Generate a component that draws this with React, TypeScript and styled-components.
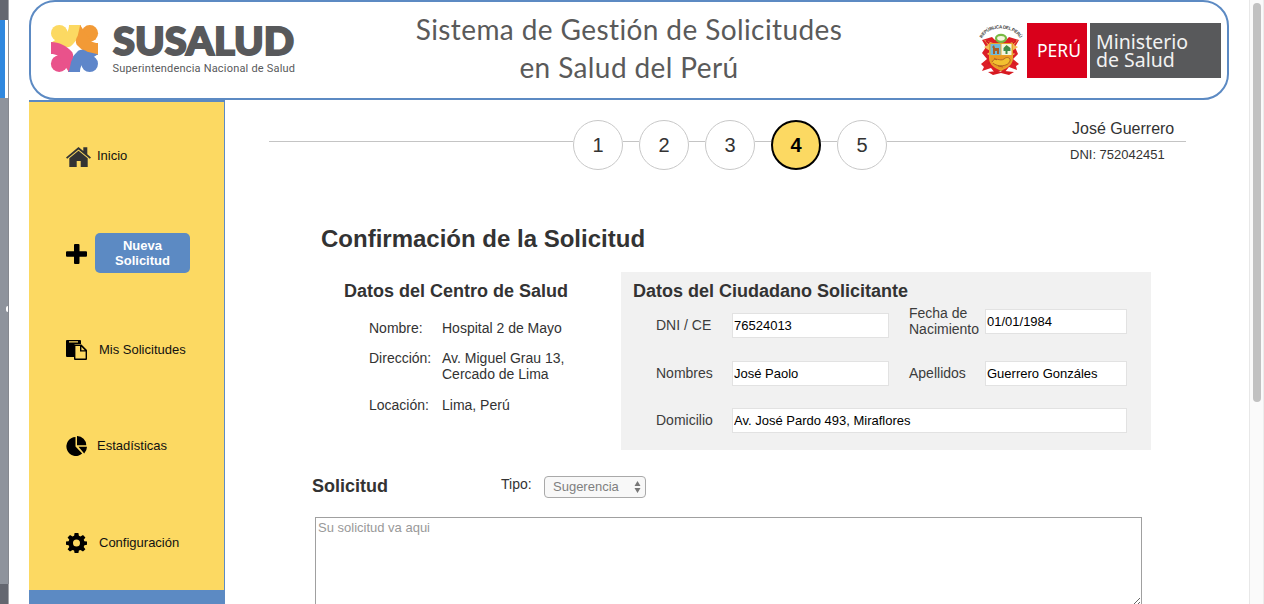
import React from "react";
import styled, { createGlobalStyle } from "styled-components";

const blue = "#5c8ac3";
const yellow = "#fcd962";
const ink = "#333333";
const sans = `"Liberation Sans", Arial, Helvetica, sans-serif`;

const GlobalStyle = createGlobalStyle`
  *, *::before, *::after { box-sizing: border-box; }
  html, body { margin: 0; padding: 0; background: #fff; overflow: hidden; }
  body { font-family: ${sans}; font-size: 14px; color: ${ink}; }
  h1, h2, p { margin: 0; }
`;

const Screen = styled.div`
  display: flex;
  width: 1264px;
  height: 604px;
  overflow: hidden;
`;

const WindowEdge = styled.div`
  display: flex;
  flex-direction: column;
  width: 9px;
  flex: none;
`;

const EdgePart = styled.div<{ $height?: number; $color: string; $line: string; $width?: number }>`
  height: ${(p) => (p.$height ? `${p.$height}px` : "auto")};
  flex: ${(p) => (p.$height ? "none" : "1")};
  border-right: 1px solid ${(p) => p.$line};
  background: linear-gradient(${(p) => p.$color}, ${(p) => p.$color}) no-repeat left / ${(p) => p.$width ?? 9}px 100%;
`;

const EdgeBody = styled(EdgePart)`
  display: flex;
  align-items: flex-start;
  justify-content: flex-end;
  padding-top: 208px;
`;

const EdgeMark = styled.span`
  width: 2px;
  height: 6px;
  border-radius: 3px 0 0 3px;
  background: #fff;
`;

const Page = styled.div`
  display: flex;
  flex-direction: column;
  flex: 1;
  padding-left: 20px;
  min-width: 0;
`;

const Scrollbar = styled.div`
  width: 15px;
  flex: none;
  padding: 3px 3px 0;
  background: #fafafa;
  border-left: 1px solid #e8e8e8;
  border-right: 1px solid #ededed;
`;

const ScrollThumb = styled.div`
  width: 8px;
  height: 399px;
  border-radius: 4px;
  background: #c1c1c1;
`;

const Header = styled.header`
  display: flex;
  align-items: flex-start;
  width: 1200px;
  height: 100px;
  flex: none;
  border: 2px solid ${blue};
  border-radius: 26px;
  background: #fff;
`;

const Brand = styled.div`
  width: 320px;
  padding: 20px 0 0 20px;

  svg { display: block; overflow: visible; }
`;

const Title = styled.h1`
  width: 556px;
  padding-top: 8px;
  font-family: Lato, "Open Sans", sans-serif;
  font-size: 28px;
  font-weight: 400;
  line-height: 38px;
  letter-spacing: 0.4px;
  text-align: center;
  color: #5a5a5a;
`;

const Ministry = styled.div`
  display: flex;
  margin-left: auto;
  padding: 21px 6px 0 0;

  svg { overflow: visible; }
`;

const Country = styled.div`
  display: flex;
  align-items: center;
  justify-content: center;
  width: 60px;
  height: 55px;
  margin: 0 3px 0 5px;
  background: #d9001b;
  color: #fff;
  font: 400 17.5px/24px "Noto Sans", "Open Sans", sans-serif;
  padding: 0 0 2px 4px;
`;

const MinistryName = styled.div`
  width: 131px;
  height: 55px;
  padding: 10px 0 0 6px;
  background: #58595b;
  color: #f2f2f2;
  font: 400 19.5px/18px "Noto Sans", "Open Sans", sans-serif;
`;

const Body = styled.div`
  display: flex;
  flex: 1;
  min-height: 0;
`;

const Sidebar = styled.nav`
  display: grid;
  grid-template-rows: 96px 98px 94px 98px 95px 1fr;
  width: 196px;
  flex: none;
  padding-top: 7px;
  border-top: 2px solid ${blue};
  border-right: 1px solid ${blue};
  background: ${yellow};
`;

const NavItem = styled.a`
  display: flex;
  align-items: center;
  padding-left: 37px;
  font-size: 13px;
  line-height: 15px;
  color: #111;

  &:nth-child(5) { padding-top: 1px; }
`;

const NavLabel = styled.span<{ $rise?: number }>`
  padding-bottom: ${(p) => p.$rise ?? 1}px;
`;

const NavIcon = styled.svg<{ $gap: number }>`
  flex: none;
  margin-right: ${(p) => p.$gap}px;
`;

const NewButton = styled.span`
  display: flex;
  align-items: center;
  justify-content: center;
  width: 95px;
  height: 40px;
  margin-bottom: 2px;
  border-radius: 5px;
  background: ${blue};
  color: #fff;
  font-weight: 700;
  text-align: center;
`;

const SidebarFooter = styled.div`
  margin-right: -1px;
  background: ${blue};
`;

const Main = styled.main`
  display: flex;
  flex-direction: column;
  flex: 1;
  min-width: 0;
  padding-top: 20px;
`;

const Stepper = styled.div`
  display: flex;
  align-items: flex-start;
  height: 50px;
  flex: none;
  padding-left: 44px;
`;

const Connector = styled.span<{ $width: number }>`
  width: ${(p) => p.$width}px;
  height: 1px;
  margin-top: 21px;
  background: #c4c4c4;
`;

const Step = styled.span<{ $active: boolean }>`
  display: flex;
  align-items: center;
  justify-content: center;
  width: 50px;
  height: 50px;
  flex: none;
  border-radius: 50%;
  border: ${(p) => (p.$active ? "2px solid #000" : "1px solid #c8c8c8")};
  background: ${(p) => (p.$active ? yellow : "#fff")};
  color: ${(p) => (p.$active ? "#000" : ink)};
  font-size: 20px;
  font-weight: ${(p) => (p.$active ? 700 : 400)};
`;

const User = styled.div`
  width: 299px;
  color: ${ink};
`;

const UserName = styled.p`
  height: 22px;
  padding-left: 185px;
  border-bottom: 1px solid #c4c4c4;
  font-size: 16px;
  line-height: 17px;
`;

const UserId = styled.p`
  padding: 5px 0 0 183px;
  font-size: 13px;
  line-height: 15px;
`;

const PageTitle = styled.h1`
  padding: 55px 0 0 96px;
  font-size: 24px;
  line-height: 28px;
  flex: none;
`;

const Columns = styled.div`
  display: flex;
  padding-top: 19px;
  flex: none;
`;

const Heading = styled.h2`
  font-size: 18px;
  line-height: 20px;
`;

const Center = styled.section`
  width: 396px;
  padding: 9px 0 0 119px;
`;

const Facts = styled.div`
  display: grid;
  grid-template-columns: 73px 150px;
  row-gap: 14.4px;
  padding: 19px 0 0 25px;
  font-size: 14px;
  line-height: 16px;
`;

const Citizen = styled.section`
  width: 530px;
  height: 178px;
  padding: 9px 0 0 12px;
  background: #f1f1f1;
`;

const Form = styled.div`
  display: grid;
  grid-template-columns: 76px 157px 96px 142px;
  grid-template-rows: 56px 47px 25px;
  align-items: start;
  padding: 4px 0 0 23px;
  font-size: 14px;
  line-height: 16px;
`;

const FormLabel = styled.label<{ $drop?: number; $second?: boolean }>`
  padding-top: ${(p) => p.$drop ?? 4}px;
  padding-left: ${(p) => (p.$second ? 20 : 0)}px;
  color: #3c3c3c;
`;

const Field = styled.input<{ $drop?: number; $wide?: boolean }>`
  width: 100%;
  height: 25px;
  margin-top: ${(p) => p.$drop ?? 0}px;
  padding: 0 1px;
  border: 1px solid #e2e2e2;
  border-radius: 0;
  background: #fff;
  color: #000;
  font: 13px ${sans};
  outline: none;
  ${(p) => p.$wide && "grid-column: span 3;"}
`;

const RequestBar = styled.div`
  display: flex;
  align-items: flex-start;
  height: 67px;
  flex: none;
  padding: 26px 0 0 87px;
`;

const TypeLabel = styled.span`
  width: 43px;
  margin-left: 113px;
  font-size: 14px;
  line-height: 16px;
`;

const TypeSelect = styled.div`
  display: flex;
  align-items: center;
  justify-content: space-between;
  width: 102px;
  height: 22px;
  padding: 0 4px 1px 8px;
  border: 1px solid #a9a9a9;
  border-radius: 4px;
  background: #f8f8f8;
  color: #7f7f7f;
  font-size: 13px;
  line-height: 15px;
`;

const RequestHeading = styled(Heading)`
  width: 76px;
`;

const RequestText = styled.textarea`
  width: 827px;
  height: 90px;
  flex: none;
  margin-left: 90px;
  padding: 2px;
  border: 1px solid #a0a0a0;
  border-radius: 0;
  background: #fff;
  font: 13px/16px ${sans};
  outline: none;
  resize: both;

  &::placeholder { color: #999; }
`;

const petals = [yellow, "#f29a36", "#5e86ca", "#e9528b"];

function SusaludLogo() {
  return (
    <svg width="246" height="54" viewBox="0 0 246 54" aria-label="Susalud">
      <g transform="translate(0 3)">
        {petals.map((fill, i) => (
          <g key={fill} fill={fill} transform={`rotate(${i * 90} 23.5 23.5)`}>
            <circle cx="8.300" cy="8.200" r="8.300" />
            <path d="M18 0h12c-.2 8.500-3.500 15-10.200 21.300c-3 1.500-6 1-9-1L0 17.800L9 12l7-5C17.500 5 18 2.500 18 0z" />
          </g>
        ))}
      </g>
      <text x="62" y="32.600" fontFamily="Lato" fontWeight="900" fontSize="37.500" fill="#58595b" stroke="#58595b" strokeWidth="1.900" textLength="181" lengthAdjust="spacingAndGlyphs">
        SUSALUD
      </text>
      <text x="61.5" y="50" fontFamily="Roboto" fontSize="11" fill="#58595b" textLength="182.5" lengthAdjust="spacing">
        Superintendencia Nacional de Salud
      </text>
    </svg>
  );
}

function CoatOfArms() {
  return (
    <svg width="42" height="55" viewBox="0 0 42 55" aria-label="Escudo del Perú">
      <path id="motto" d="M2 15.500C8 2 33 2 40 15.500" fill="none" />
      <text fontFamily="Liberation Sans" fontWeight="700" fontSize="4.600" fill="#444">
        <textPath href="#motto" textLength="45">REPÚBLICA DEL PERÚ</textPath>
      </text>
      <path d="M2 17l10-3 3 3h11l3-3 10 3-4 7 3 7-5 5 6 5-3 2 1 4-8-3-5 6-4-2-5 2-4-5-9 3 2-4-3-3 6-5-5-6 4-6z" fill="#dc1f26" />
      <path d="M4 17l9 3v14l-6-3 3-3-6-4 4-2zM38 17l-8 3v14l5-3-3-3 6-4-4-2z" fill="#f3bd58" />
      <path d="M6 18l7 5M36 18l-7 5M8 28l5 4M35 28l-5 4M8 41l5-4M35 41l-6-4" stroke="#d71920" strokeWidth="2" />
      <path d="M9 20h24v15c0 7-6 10-12 13c-6-3-12-6-12-13z" fill="#e7a52c" />
      <path d="M10.500 21h10v11h-10z" fill="#6db9dc" />
      <path d="M21.500 21h10v11h-10z" fill="#f4f6df" />
      <path d="M13 31v-6l-1-1 2-2 1 3h4v6h-2v-3h-2v3z" fill="#a85e25" />
      <path d="M25.500 31v-3h-2v-3l3-3 4 3v3h-3v3z" fill="#438b48" />
      <path d="M10.500 32.500h21v4c0 5-5 7-10.500 10c-5.500-3-10.500-5-10.500-10z" fill="#ec9b22" />
      <path d="M12 39c3-6 8 0 12-3c3-3 7-1 6 2c-2 6-13 6-17 2M17 37l-3-2M18 43l5 1" fill="#f2c030" stroke="#a85720" strokeWidth=".8" />
      <ellipse cx="21" cy="15.300" rx="5" ry="3.500" fill="#f4f6df" stroke="#79b943" strokeWidth="2.200" />
      <path d="M8 49c5 0 9-2 13 0c4-2 8 0 13 0l-5 3-8-2-8 2z" fill="#d71920" />
    </svg>
  );
}

const HomeIcon = () => (
  <NavIcon $gap={6} width="25" height="20" viewBox="0 0 25 20" fill="#333">
    <path d="M12.500 0L17.300 4V.3h4v7L25 10.500l-1.200 1.300L12.500 2.400 1.200 11.800 0 10.500z" />
    <path d="M12.500 3.700l9.200 7.600V20h-7v-6h-4v6H3.300v-8.700z" />
  </NavIcon>
);

const PlusIcon = () => (
  <NavIcon $gap={8} width="21" height="20" viewBox="0 0 21 20">
    <path d="M9 0h3.500q1 0 1 1v6.300h6.500q1 0 1 1v3.400q0 1-1 1h-6.500V19q0 1-1 1H9q-1 0-1-1v-6.300H1q-1 0-1-1V8.300q0-1 1-1h7V1q0-1 1-1z" />
  </NavIcon>
);

const PasteIcon = () => (
  <NavIcon $gap={12} width="21" height="20" viewBox="0 0 21 20">
    <path fillRule="evenodd" d="M1 0h13q1 0 1 1v3H9.500q-1.500 0-1.500 1.500v11.500H1q-1 0-1-1V1q0-1 1-1zM3 1.200v1.300h9V1.200z" />
    <path fillRule="evenodd" d="M8 4.500h7.500L21 10V19q0 1-1 1H9q-1 0-1-1zM9.400 6v12.600h10.200v-7H14V6zM15.400 6.700v3.500h3.400z" />
  </NavIcon>
);

const PieIcon = () => (
  <NavIcon $gap={10} width="21" height="20" viewBox="0 0 21 20">
    <path d="M9.500 1v9.600l6.700 7A9.500 9.500 0 1 1 9.500 1z" />
    <path d="M11 0a9.200 9.200 0 0 1 9.300 9.200H11zM12.500 10.800H21a9.600 9.600 0 0 1-2.800 6.600z" />
  </NavIcon>
);

const GearIcon = () => (
  <NavIcon $gap={12} width="21" height="20" viewBox="0 0 21 20">
    <path fillRule="evenodd" d="M8.600 0h3.800l.5 2.800 1.600.7L17 1.900l2.400 2.500-1.700 2.300.7 1.500 2.600.4v3.200l-2.600.5-.7 1.600 1.700 2.300-2.400 2.300-2.500-1.600-1.600.7-.5 2.500H8.600l-.5-2.500-1.600-.7L4 18.500l-2.400-2.300 1.700-2.300-.7-1.600-2.600-.5V8.600l2.600-.4.7-1.500-1.700-2.300L4 1.900l2.500 1.600 1.600-.7zM10.500 6.600a3.500 3.500 0 1 0 0 7a3.500 3.500 0 1 0 0-7z" />
  </NavIcon>
);

const steps = [1, 2, 3, 4, 5];

export default function App() {
  return (
    <Screen>
      <GlobalStyle />
      <WindowEdge>
        <EdgePart $height={20} $color="#646770" $line="#a3a4a9" />
        <EdgePart $height={78} $color="#2f88df" $line="#8e9096" $width={5} />
        <EdgeBody $height={486} $color="#8e939c" $line="#85888f">
          <EdgeMark />
        </EdgeBody>
        <EdgePart $color="#646770" $line="#a3a4a9" />
      </WindowEdge>
      <Page>
        <Header>
          <Brand>
            <SusaludLogo />
          </Brand>
          <Title>
            Sistema de Gestión de Solicitudes
            <br />
            en Salud del Perú
          </Title>
          <Ministry>
            <CoatOfArms />
            <Country>PERÚ</Country>
            <MinistryName>
              Ministerio
              <br />
              de Salud
            </MinistryName>
          </Ministry>
        </Header>
        <Body>
          <Sidebar>
            <NavItem>
              <HomeIcon />
              <NavLabel $rise={3}>Inicio</NavLabel>
            </NavItem>
            <NavItem>
              <PlusIcon />
              <NewButton>Nueva<br />Solicitud</NewButton>
            </NavItem>
            <NavItem>
              <PasteIcon />
              <NavLabel>Mis Solicitudes</NavLabel>
            </NavItem>
            <NavItem>
              <PieIcon />
              <NavLabel>Estadísticas</NavLabel>
            </NavItem>
            <NavItem>
              <GearIcon />
              <NavLabel>Configuración</NavLabel>
            </NavItem>
            <SidebarFooter />
          </Sidebar>
          <Main>
            <Stepper>
              <Connector $width={304} />
              {steps.map((n) => (
                <React.Fragment key={n}>
                  {n > 1 && <Connector $width={16} />}
                  <Step $active={n === 4}>{n}</Step>
                </React.Fragment>
              ))}
              <User>
                <UserName>José Guerrero</UserName>
                <UserId>DNI: 752042451</UserId>
              </User>
            </Stepper>
            <PageTitle>Confirmación de la Solicitud</PageTitle>
            <Columns>
              <Center>
                <Heading>Datos del Centro de Salud</Heading>
                <Facts>
                  <span>Nombre:</span>
                  <span>Hospital 2 de Mayo</span>
                  <span>Dirección:</span>
                  <span>Av. Miguel Grau 13,<br />Cercado de Lima</span>
                  <span>Locación:</span>
                  <span>Lima, Perú</span>
                </Facts>
              </Center>
              <Citizen>
                <Heading>Datos del Ciudadano Solicitante</Heading>
                <Form>
                  <FormLabel $drop={12}>DNI / CE</FormLabel>
                  <Field $drop={8} defaultValue="76524013" />
                  <FormLabel $drop={0} $second>Fecha de Nacimiento</FormLabel>
                  <Field $drop={4} defaultValue="01/01/1984" />
                  <FormLabel>Nombres</FormLabel>
                  <Field defaultValue="José Paolo" />
                  <FormLabel $second>Apellidos</FormLabel>
                  <Field defaultValue="Guerrero Gonzáles" />
                  <FormLabel>Domicilio</FormLabel>
                  <Field $wide defaultValue="Av. José Pardo 493, Miraflores" />
                </Form>
              </Citizen>
            </Columns>
            <RequestBar>
              <RequestHeading>Solicitud</RequestHeading>
              <TypeLabel>Tipo:</TypeLabel>
              <TypeSelect>
                Sugerencia
                <svg width="7" height="12" viewBox="0 0 7 12" fill="#777">
                  <path d="M3.500 0L6.500 5H.5zM3.500 12L.5 7h6z" />
                </svg>
              </TypeSelect>
            </RequestBar>
            <RequestText placeholder="Su solicitud va aqui" />
          </Main>
        </Body>
      </Page>
      <Scrollbar>
        <ScrollThumb />
      </Scrollbar>
    </Screen>
  );
}
